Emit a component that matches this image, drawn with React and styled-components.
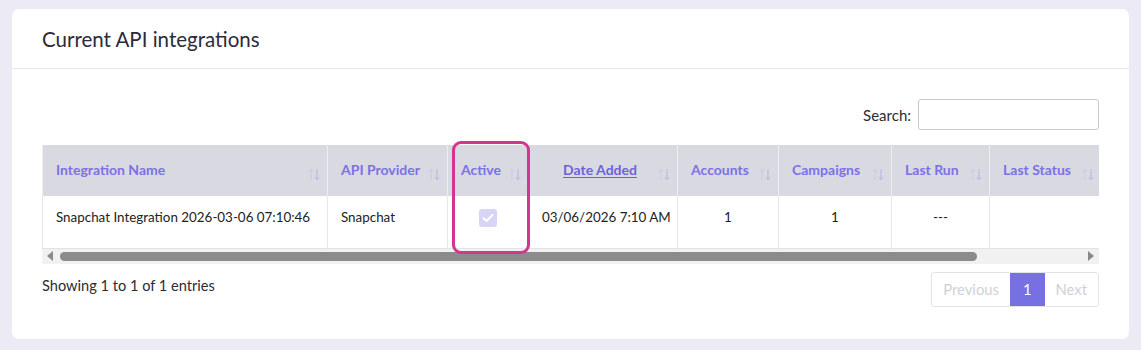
import React from "react";
import styled, { createGlobalStyle } from "styled-components";

const Global = createGlobalStyle`
  html, body { margin: 0; padding: 0; background: #ecebf5; }
  body { font-family: "Lato", "Noto Sans", sans-serif; color: #2b2b35; }
  * { box-sizing: border-box; }
`;

const Page = styled.div`
  padding: 9px 12px 11px 12px;
`;

const Card = styled.section`
  background: #fff;
  border-radius: 7px;
  height: 330px;
`;

const CardHeader = styled.header`
  height: 60px;
  padding: 0 30px;
  display: flex;
  align-items: center;
  border-bottom: 1px solid #e6e6ea;
`;

const Title = styled.h2`
  margin: 0;
  font-size: 20.5px;
  font-weight: 400;
  color: #2b2b3a;
`;

const CardBody = styled.div`
  padding: 30px 30px 0 30px;
`;

const SearchRow = styled.div`
  display: flex;
  justify-content: flex-end;
  align-items: center;
  gap: 7px;
  margin-bottom: 15px;
`;

const SearchLabel = styled.label`
  font-size: 15px;
  color: #2b2b35;
`;

const SearchInput = styled.input`
  width: 181px;
  height: 31px;
  border: 1px solid #c9c9cc;
  border-radius: 3px;
  outline: none;
`;

const TableArea = styled.div`
  position: relative;
`;

const Scroller = styled.div`
  overflow: hidden;
  width: 1057px;
`;

const Table = styled.table`
  border-collapse: collapse;
  table-layout: fixed;
  width: 1186px;
  border: 1px solid #e3e3e7;
  margin-top: -1px;
`;

const Th = styled.th`
  height: 51px;
  padding: 0 7px 0 13px;
  background: #d9d9e2;
  border-left: 1px solid #ececf1;
  text-align: left;
  vertical-align: middle;
`;

const ThInner = styled.div`
  display: flex;
  justify-content: space-between;
  align-items: center;
  height: 51px;
  padding-bottom: 2px;
`;

const ThLabel = styled.span`
  font-size: 14px;
  font-weight: 700;
  color: ${(p) => (p.$link ? "#6c62dc" : "#7b71e8")};
  text-decoration: ${(p) => (p.$link ? "underline" : "none")};
  text-underline-offset: 2px;
  white-space: nowrap;
  flex: ${(p) => (p.$grow ? 1 : "none")};
  text-align: ${(p) => (p.$grow ? "center" : "left")};
`;

const SortIcon = styled.svg`
  flex: none;
  align-self: flex-end;
  margin-bottom: 13px;
`;

const Td = styled.td`
  height: 52px;
  padding: 0 13px 9px 13px;
  font-size: 13.4px;
  color: #222;
  border-left: 1px solid #e6e6ea;
  text-align: ${(p) => p.$align || "left"};
  white-space: nowrap;
`;

const CheckBox = styled.span`
  display: inline-flex;
  align-items: center;
  justify-content: center;
  width: 18px;
  height: 18px;
  border-radius: 3px;
  background: #d7d5f6;
  vertical-align: middle;
`;

const ScrollBar = styled.div`
  display: flex;
  align-items: center;
  height: 15px;
  width: 1057px;
  background: #f1f1f1;
  padding: 0 3px;
  gap: 7px;
`;

const Arrow = styled.span`
  width: 0;
  height: 0;
  border-top: 5px solid transparent;
  border-bottom: 5px solid transparent;
  ${(p) =>
    p.$dir === "left"
      ? "border-right: 6px solid #8a8a8a; margin-left: 2px;"
      : "border-left: 6px solid #8a8a8a; margin-right: 2px;"}
`;

const Track = styled.div`
  flex: 1;
  display: flex;
  align-items: center;
  height: 100%;
`;

const Thumb = styled.div`
  height: 9px;
  border-radius: 5px;
  background: #8b8b8b;
`;

const Highlight = styled.div`
  position: absolute;
  left: 410px;
  top: -4px;
  width: 78px;
  height: 113px;
  border: 3.5px solid #d4358e;
  border-radius: 9px;
  pointer-events: none;
`;

const Footer = styled.div`
  display: flex;
  justify-content: space-between;
  align-items: flex-start;
  padding-top: 8px;
`;

const Info = styled.div`
  font-size: 14.6px;
  color: #2b2b35;
  padding-top: 5px;
`;

const Pager = styled.div`
  display: flex;
  border: 1px solid #e2e4e8;
  border-radius: 3px;
  height: 35px;
`;

const PageBtn = styled.span`
  display: flex;
  align-items: center;
  justify-content: center;
  padding: 0 ${(p) => p.$pad || 12}px;
  font-size: 14.8px;
  color: ${(p) => (p.$active ? "#fff" : "#cdd2da")};
  background: ${(p) => (p.$active ? "#7670e2" : "transparent")};
`;

const Sort = () => (
  <SortIcon width="12" height="13" viewBox="0 0 12 13">
    <path d="M3 12V1.5M0.8 3.7L3 1.3 5.2 3.7" stroke="#c9c8ea" strokeWidth="1" fill="none" />
    <path d="M9 1v10.5M6.8 9.3L9 11.7 11.2 9.3" stroke="#b6b4e4" strokeWidth="1" fill="none" />
  </SortIcon>
);

const columns = [
  { key: "name", label: "Integration Name", w: 285 },
  { key: "provider", label: "API Provider", w: 120 },
  { key: "active", label: "Active", w: 81 },
  { key: "date", label: "Date Added", w: 149, link: true },
  { key: "accounts", label: "Accounts", w: 101 },
  { key: "campaigns", label: "Campaigns", w: 113 },
  { key: "lastrun", label: "Last Run", w: 98 },
  { key: "laststatus", label: "Last Status", w: 112 },
  { key: "extra", label: "", w: 127 },
];

export default function App() {
  return (
    <>
      <Global />
      <Page>
        <Card>
          <CardHeader>
            <Title>Current API integrations</Title>
          </CardHeader>
          <CardBody>
            <SearchRow>
              <SearchLabel htmlFor="search">Search:</SearchLabel>
              <SearchInput id="search" type="text" />
            </SearchRow>
            <TableArea>
              <Scroller>
                <Table>
                  <colgroup>
                    {columns.map((c) => (
                      <col key={c.key} style={{ width: c.w }} />
                    ))}
                  </colgroup>
                  <thead>
                    <tr>
                      {columns.map((c) => (
                        <Th key={c.key}>
                          <ThInner>
                            <ThLabel $link={c.link} $grow={c.link}>{c.label}</ThLabel>
                            {c.label && <Sort />}
                          </ThInner>
                        </Th>
                      ))}
                    </tr>
                  </thead>
                  <tbody>
                    <tr>
                      <Td>Snapchat Integration 2026-03-06 07:10:46</Td>
                      <Td>Snapchat</Td>
                      <Td $align="center">
                        <CheckBox>
                          <svg width="12" height="10" viewBox="0 0 12 10">
                            <path d="M1.5 5.2L4.5 8 10.5 2" stroke="#fff" strokeWidth="2" fill="none" strokeLinecap="round" strokeLinejoin="round" />
                          </svg>
                        </CheckBox>
                      </Td>
                      <Td $align="center">03/06/2026 7:10 AM</Td>
                      <Td $align="center">1</Td>
                      <Td $align="center">1</Td>
                      <Td $align="center">---</Td>
                      <Td></Td>
                      <Td></Td>
                    </tr>
                  </tbody>
                </Table>
              </Scroller>
              <ScrollBar>
                <Arrow $dir="left" />
                <Track>
                  <Thumb style={{ width: 917 }} />
                </Track>
                <Arrow $dir="right" />
              </ScrollBar>
              <Highlight />
            </TableArea>
            <Footer>
              <Info>Showing 1 to 1 of 1 entries</Info>
              <Pager>
                <PageBtn $pad={11}>Previous</PageBtn>
                <PageBtn $active $pad={13}>1</PageBtn>
                <PageBtn $pad={11}>Next</PageBtn>
              </Pager>
            </Footer>
          </CardBody>
        </Card>
      </Page>
    </>
  );
}
